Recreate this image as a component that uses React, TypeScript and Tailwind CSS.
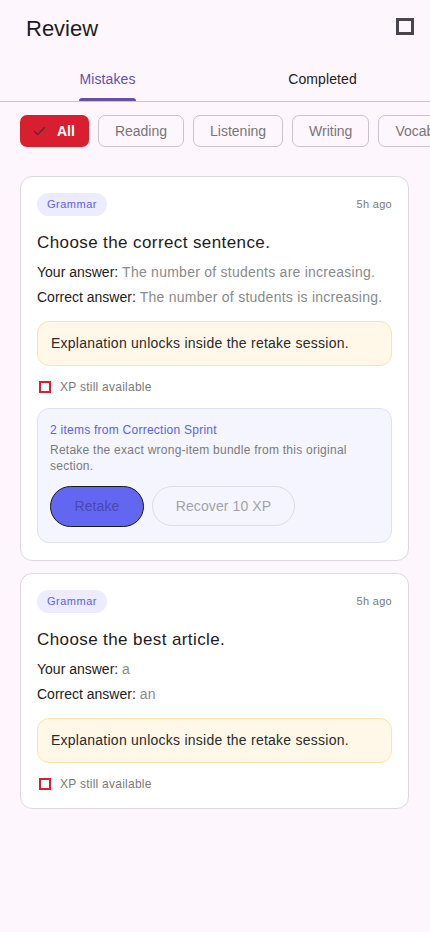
import { Check } from "lucide-react";

const font = { fontFamily: '"Liberation Sans", Arial, sans-serif' };

const chips = ["Reading", "Listening", "Writing", "Vocabulary"];

type Item = {
  title: string;
  yours: string;
  correct: string;
  retake?: boolean;
};

const items: Item[] = [
  {
    title: "Choose the correct sentence.",
    yours: "The number of students are increasing.",
    correct: "The number of students is increasing.",
    retake: true,
  },
  { title: "Choose the best article.", yours: "a", correct: "an" },
];

function MistakeCard({ item }: { item: Item }) {
  return (
    <div className="rounded-[12px] border border-[#dcd8de] bg-white px-[16px] pb-[17px] pt-[16px]">
      <div className="flex items-center justify-between">
        <span className="rounded-full bg-[#ececfd] px-[10px] py-[5px] text-[11px] leading-[13px] tracking-[0.5px] text-[#5b5ff0]">
          Grammar
        </span>
        <span className="text-[11px] tracking-[0.3px] text-[#7a7a7a]">5h ago</span>
      </div>
      <p className="mt-[16px] text-[17px] leading-[22px] tracking-[0.4px] text-[#1d1b20]">{item.title}</p>
      <p className="mt-[10px] text-[14px] leading-[17px] text-[#1d1b20]">
        Your answer: <span className="tracking-[0.25px] text-[#8a8a8a]">{item.yours}</span>
      </p>
      <p className="mt-[8px] text-[14px] leading-[17px] text-[#1d1b20]">
        Correct answer: <span className="tracking-[0.25px] text-[#8a8a8a]">{item.correct}</span>
      </p>
      <div className="mt-[15px] rounded-[12px] border border-[#fbe4a6] bg-[#fff8e8] px-[13px] py-[13px] text-[14px] leading-[17px] tracking-[0.25px] text-[#2a2a2a]">
        Explanation unlocks inside the retake session.
      </div>
      <div className="mt-[14px] flex items-center gap-[9px] pl-[2px]">
        <span className="h-[12px] w-[12px] border-2 border-[#d7202f]" />
        <span className="text-[12px] leading-[14px] tracking-[0.25px] text-[#7a7a7a]">XP still available</span>
      </div>
      {item.retake && (
        <div className="mt-[14px] rounded-[12px] border border-[#dfe0f7] bg-[#f4f5ff] px-[12px] pb-[15px] pt-[14px]">
          <p className="text-[12px] leading-[15px] tracking-[0.25px] text-[#5b5ff0]">
            2 items from Correction Sprint
          </p>
          <p className="mt-[4px] text-[12px] leading-[16px] tracking-[0.25px] text-[#7a7a7a]">
            Retake the exact wrong-item bundle from this original section.
          </p>
          <div className="mt-[12px] flex gap-[8px]">
            <button className="h-[41px] w-[94px] rounded-full border border-[#1a1a1a] bg-[#6366f1] text-[14px] tracking-[0.1px] text-[#4b48b0]">
              Retake
            </button>
            <button className="h-[40px] w-[143px] rounded-full border border-[#dcdcec] text-[14px] tracking-[0.1px] text-[#a3a3a8]">
              Recover 10 XP
            </button>
          </div>
        </div>
      )}
    </div>
  );
}

export default function App() {
  return (
    <div className="min-h-[932px] w-[430px] overflow-hidden bg-[#fdf7fd]" style={font}>
      <header className="flex items-center justify-between pl-[26px] pr-[16px] pt-[15px]">
        <h1 className="text-[22px] leading-[28px] text-[#1d1b20]">Review</h1>
        <span className="mt-[-5px] h-[17px] w-[18px] border-[3px] border-[#49454f]" />
      </header>
      <nav className="mt-[28px] flex border-b border-[#cac4d0]">
        <div className="flex flex-1 justify-center">
          <div className="flex flex-col items-center">
            <span className="pb-[10px] text-[14px] leading-[17px] tracking-[0.1px] text-[#6750a4]">Mistakes</span>
            <span className="h-[3px] w-full rounded-t-[3px] bg-[#6750a4]" />
          </div>
        </div>
        <div className="flex flex-1 justify-center">
          <span className="pb-[13px] text-[14px] leading-[17px] tracking-[0.1px] text-[#1d1b20]">Completed</span>
        </div>
      </nav>
      <div className="mt-[13px] flex gap-[9px] pl-[20px]">
        <div className="flex h-[32px] shrink-0 items-center gap-[10px] rounded-[7px] bg-[#d81f30] pl-[12px] pr-[14px]">
          <Check size={15} strokeWidth={2} className="text-[#3d3540]" />
          <span className="text-[14px] font-bold text-white">All</span>
        </div>
        {chips.map((c) => (
          <div
            key={c}
            className="flex h-[32px] shrink-0 items-center rounded-[7px] border border-[#c9c4cc] px-[16px] text-[14px] text-[#787579]"
          >
            {c}
          </div>
        ))}
      </div>
      <div className="mt-[29px] flex flex-col gap-[12px] pl-[20px] pr-[21px]">
        {items.map((it) => (
          <MistakeCard key={it.title} item={it} />
        ))}
      </div>
    </div>
  );
}
